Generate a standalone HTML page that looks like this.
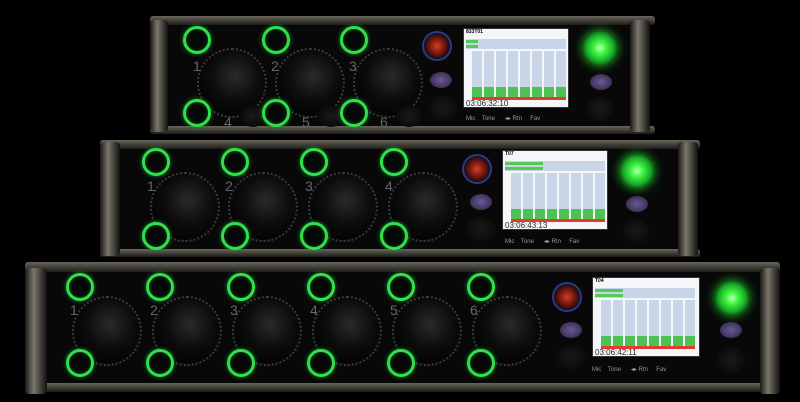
<!DOCTYPE html><html><head><style>
body{margin:0;width:800px;height:402px;background:#000;overflow:hidden;position:relative;font-family:"Liberation Sans",sans-serif}
div{position:absolute;box-sizing:border-box}
.unit{background:#080809}
.bar{background:linear-gradient(#6a665c,#3a3832 60%,#1e1c1a);border-radius:3px}
.hand{background:linear-gradient(90deg,#1a1816,#7a766c 40%,#45423c 70%,#121110);border-radius:4px}
.ring{width:28px;height:28px;border:3px solid #2fe04a;border-radius:50%;box-shadow:0 0 5px #1a8a2a,inset 0 0 4px #0a4a14;background:#050806}
.dial{width:70px;height:70px;border-radius:50%;border:2px dotted #3a3a3a;background:radial-gradient(circle at 55% 40%,#2a2a2c,#0c0c0c 45%,#050505 70%)}
.knob{width:26px;height:22px;border-radius:50%;background:radial-gradient(#1a1a1a,#040404)}
.num{color:#666;font-size:14px}
.scr{width:106px;height:80px;background:#f4f6fa;transform-origin:0 0;overflow:hidden;border:1px solid #333}
.scr .h{left:0;top:0;width:104px;height:6px;font-size:5px;color:#000;font-weight:bold;padding-left:2px}
.scr .mt{top:10px;left:2px;width:100px;height:10px;background:#c8d6e8}
.scr .g{background:#55c85a}
.scr .col{top:22px;width:10px;height:48px;background:#c8d6e8}
.scr .gc{top:58px;width:10px;height:10px;background:#4cc452}
.scr .rd{top:68px;width:10px;height:3px;background:#e03c30}
.scr .tc{left:2px;top:70px;font-size:8px;color:#222}
.gk{width:34px;height:34px;border-radius:50%;background:radial-gradient(circle at 50% 50%,#cfffcf 0,#4bff4b 20%,#18b028 55%,#0a3a10 80%);box-shadow:0 0 10px #2c2}
.pk{width:22px;height:16px;border-radius:50%;background:radial-gradient(#6a5a98,#2a2038)}
.rec{width:30px;height:30px;border-radius:50%;background:radial-gradient(#d04020,#601010 50%,#111 70%);border:2px solid #2a3a8a}
.lbl{color:#999;font-size:6px}
</style></head><body>

<!-- UNIT 1 -->
<div class="unit" style="left:160px;top:22px;width:480px;height:108px"></div>
<div class="bar" style="left:150px;top:16px;width:505px;height:9px"></div>
<div class="bar" style="left:150px;top:126px;width:505px;height:8px"></div>
<div class="hand" style="left:150px;top:20px;width:18px;height:112px"></div>
<div class="hand" style="left:630px;top:20px;width:20px;height:112px"></div>
<div class="dial" style="left:197px;top:48px"></div>
<div class="dial" style="left:275px;top:48px"></div>
<div class="dial" style="left:353px;top:48px"></div>
<div class="knob" style="left:240px;top:105px"></div>
<div class="knob" style="left:318px;top:105px"></div>
<div class="knob" style="left:396px;top:105px"></div>
<div class="ring" style="left:183px;top:26px"></div>
<div class="ring" style="left:262px;top:26px"></div>
<div class="ring" style="left:340px;top:26px"></div>
<div class="ring" style="left:183px;top:99px"></div>
<div class="ring" style="left:262px;top:99px"></div>
<div class="ring" style="left:340px;top:99px"></div>
<div class="num" style="left:193px;top:58px">1</div><div class="num" style="left:271px;top:58px">2</div><div class="num" style="left:349px;top:58px">3</div>
<div class="num" style="left:224px;top:114px">4</div><div class="num" style="left:302px;top:114px">5</div><div class="num" style="left:380px;top:114px">6</div>
<div class="rec" style="left:422px;top:31px"></div>
<div class="pk" style="left:430px;top:72px"></div>
<div class="knob" style="left:428px;top:95px;width:30px;height:26px"></div>
<div class="gk" style="left:583px;top:31px"></div>
<div class="pk" style="left:590px;top:74px"></div>
<div class="knob" style="left:586px;top:96px;width:28px;height:26px"></div>
<div class="lbl" style="left:466px;top:115px">Mic &nbsp;&nbsp; Tone &nbsp;&nbsp;&nbsp;&nbsp; ◂▸ Rtn &nbsp;&nbsp;&nbsp; Fav</div>
<div class="scr" style="left:463px;top:28px">
 <div class="h">833T01</div>
 <div class="mt"><div class="g" style="left:0;top:1px;width:12px;height:3px"></div><div class="g" style="left:0;top:6px;width:12px;height:3px"></div></div>
 <div class="col" style="left:8px"></div><div class="col" style="left:20px"></div><div class="col" style="left:32px"></div><div class="col" style="left:44px"></div><div class="col" style="left:56px"></div><div class="col" style="left:68px"></div><div class="col" style="left:80px"></div><div class="col" style="left:92px"></div>
 <div class="gc" style="left:8px"></div><div class="gc" style="left:20px"></div><div class="gc" style="left:32px"></div><div class="gc" style="left:44px"></div><div class="gc" style="left:56px"></div><div class="gc" style="left:68px"></div><div class="gc" style="left:80px"></div><div class="gc" style="left:92px"></div>
 <div class="rd" style="left:8px;width:94px"></div>
 <div class="tc">03:06:32:10</div>
</div>

<!-- UNIT 2 -->
<div class="unit" style="left:110px;top:146px;width:580px;height:104px"></div>
<div class="bar" style="left:100px;top:140px;width:600px;height:9px"></div>
<div class="bar" style="left:100px;top:249px;width:600px;height:8px"></div>
<div class="hand" style="left:100px;top:142px;width:20px;height:114px"></div>
<div class="hand" style="left:678px;top:142px;width:20px;height:114px"></div>
<div class="dial" style="left:150px;top:172px"></div>
<div class="dial" style="left:228px;top:172px"></div>
<div class="dial" style="left:308px;top:172px"></div>
<div class="dial" style="left:388px;top:172px"></div>
<div class="num" style="left:147px;top:178px">1</div><div class="num" style="left:225px;top:178px">2</div><div class="num" style="left:305px;top:178px">3</div><div class="num" style="left:385px;top:178px">4</div>
<div class="ring" style="left:142px;top:148px"></div>
<div class="ring" style="left:221px;top:148px"></div>
<div class="ring" style="left:300px;top:148px"></div>
<div class="ring" style="left:380px;top:148px"></div>
<div class="ring" style="left:142px;top:222px"></div>
<div class="ring" style="left:221px;top:222px"></div>
<div class="ring" style="left:300px;top:222px"></div>
<div class="ring" style="left:380px;top:222px"></div>
<div class="rec" style="left:462px;top:154px"></div>
<div class="pk" style="left:470px;top:194px"></div>
<div class="knob" style="left:466px;top:216px;width:30px;height:26px"></div>
<div class="gk" style="left:620px;top:154px"></div>
<div class="pk" style="left:626px;top:196px"></div>
<div class="knob" style="left:622px;top:218px;width:28px;height:26px"></div>
<div class="lbl" style="left:505px;top:238px">Mic &nbsp;&nbsp; Tone &nbsp;&nbsp;&nbsp;&nbsp; ◂▸ Rtn &nbsp;&nbsp;&nbsp; Fav</div>
<div class="scr" style="left:502px;top:150px">
 <div class="h">T07</div>
 <div class="mt"><div class="g" style="left:0;top:1px;width:38px;height:3px"></div><div class="g" style="left:0;top:6px;width:38px;height:3px"></div></div>
 <div class="col" style="left:8px"></div><div class="col" style="left:20px"></div><div class="col" style="left:32px"></div><div class="col" style="left:44px"></div><div class="col" style="left:56px"></div><div class="col" style="left:68px"></div><div class="col" style="left:80px"></div><div class="col" style="left:92px"></div>
 <div class="gc" style="left:8px"></div><div class="gc" style="left:20px"></div><div class="gc" style="left:32px"></div><div class="gc" style="left:44px"></div><div class="gc" style="left:56px"></div><div class="gc" style="left:68px"></div><div class="gc" style="left:80px"></div><div class="gc" style="left:92px"></div>
 <div class="rd" style="left:8px;width:94px"></div>
 <div class="tc">03:06:43:13</div>
</div>

<!-- UNIT 3 -->
<div class="unit" style="left:35px;top:268px;width:740px;height:122px"></div>
<div class="bar" style="left:25px;top:262px;width:755px;height:10px"></div>
<div class="bar" style="left:25px;top:383px;width:755px;height:9px"></div>
<div class="hand" style="left:25px;top:268px;width:22px;height:126px"></div>
<div class="hand" style="left:760px;top:268px;width:20px;height:126px"></div>
<div class="dial" style="left:72px;top:296px"></div>
<div class="dial" style="left:152px;top:296px"></div>
<div class="dial" style="left:232px;top:296px"></div>
<div class="dial" style="left:312px;top:296px"></div>
<div class="dial" style="left:392px;top:296px"></div>
<div class="dial" style="left:472px;top:296px"></div>
<div class="num" style="left:70px;top:302px">1</div><div class="num" style="left:150px;top:302px">2</div><div class="num" style="left:230px;top:302px">3</div><div class="num" style="left:310px;top:302px">4</div><div class="num" style="left:390px;top:302px">5</div><div class="num" style="left:470px;top:302px">6</div>
<div class="ring" style="left:66px;top:273px"></div>
<div class="ring" style="left:146px;top:273px"></div>
<div class="ring" style="left:227px;top:273px"></div>
<div class="ring" style="left:307px;top:273px"></div>
<div class="ring" style="left:387px;top:273px"></div>
<div class="ring" style="left:467px;top:273px"></div>
<div class="ring" style="left:66px;top:349px"></div>
<div class="ring" style="left:146px;top:349px"></div>
<div class="ring" style="left:227px;top:349px"></div>
<div class="ring" style="left:307px;top:349px"></div>
<div class="ring" style="left:387px;top:349px"></div>
<div class="ring" style="left:467px;top:349px"></div>
<div class="rec" style="left:552px;top:282px"></div>
<div class="pk" style="left:560px;top:322px"></div>
<div class="knob" style="left:556px;top:344px;width:30px;height:26px"></div>
<div class="gk" style="left:715px;top:281px"></div>
<div class="pk" style="left:720px;top:322px"></div>
<div class="knob" style="left:716px;top:346px;width:30px;height:28px"></div>
<div class="lbl" style="left:592px;top:366px">Mic &nbsp;&nbsp; Tone &nbsp;&nbsp;&nbsp;&nbsp; ◂▸ Rtn &nbsp;&nbsp;&nbsp; Fav</div>
<div class="scr" style="left:592px;top:277px;width:108px;height:80px">
 <div class="h">T04</div>
 <div class="mt"><div class="g" style="left:0;top:1px;width:28px;height:3px"></div><div class="g" style="left:0;top:6px;width:28px;height:3px"></div></div>
 <div class="col" style="left:8px"></div><div class="col" style="left:20px"></div><div class="col" style="left:32px"></div><div class="col" style="left:44px"></div><div class="col" style="left:56px"></div><div class="col" style="left:68px"></div><div class="col" style="left:80px"></div><div class="col" style="left:92px"></div>
 <div class="gc" style="left:8px"></div><div class="gc" style="left:20px"></div><div class="gc" style="left:32px"></div><div class="gc" style="left:44px"></div><div class="gc" style="left:56px"></div><div class="gc" style="left:68px"></div><div class="gc" style="left:80px"></div><div class="gc" style="left:92px"></div>
 <div class="rd" style="left:8px;width:94px"></div>
 <div class="tc">03:06:42:11</div>
</div>
</body></html>
